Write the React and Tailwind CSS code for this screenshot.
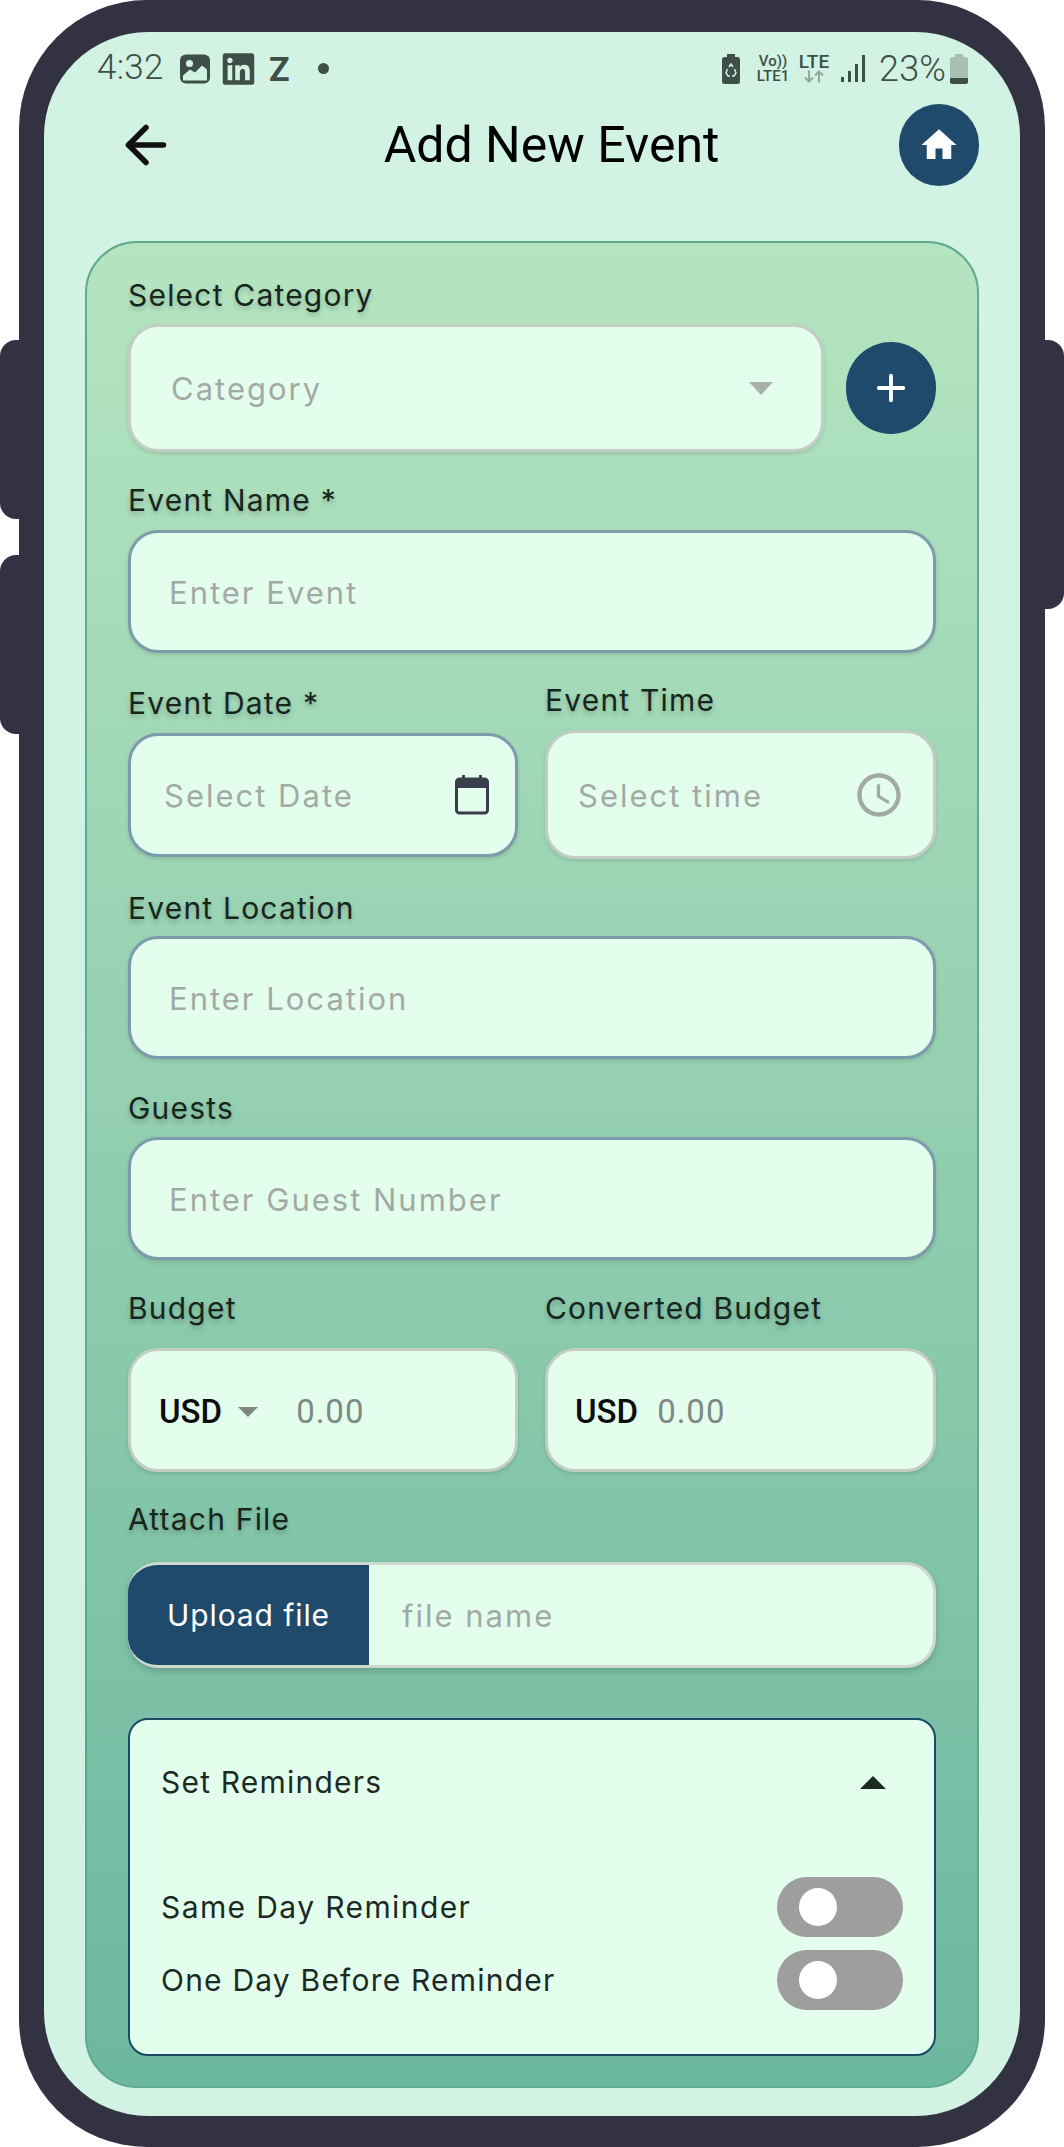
import React from 'react';
import { ArrowLeft, Plus } from 'lucide-react';
import { MdHome, MdAccessTime } from 'react-icons/md';
import { FaLinkedin } from 'react-icons/fa';

const Label = ({ children, className = '' }) => (
  <div className={`h-[40px] leading-[40px] text-[30px] tracking-[1.2px] text-[#16261e] [text-shadow:0_3px_5px_rgba(0,0,0,0.22)] whitespace-nowrap ${className}`}>
    {children}
  </div>
);

const Placeholder = ({ children, className = '' }) => (
  <span className={`text-[31px] leading-[40px] pt-[2px] tracking-[2px] text-[#a3aaa5] whitespace-nowrap ${className}`}>{children}</span>
);

// text input with the blue-grey outline
const Input = ({ placeholder }) => (
  <div className="h-[123px] rounded-[30px] bg-[#e3feed] border-[3px] border-[#7c9cab] shadow-[0_2px_4px_rgba(0,0,0,0.12)] flex items-center pl-[38px]">
    <Placeholder>{placeholder}</Placeholder>
  </div>
);

const Toggle = () => (
  <div className="w-[126px] h-[60px] rounded-full bg-[#9e9e9e] flex items-center pl-[22px]">
    <div className="w-[38px] h-[38px] rounded-full bg-white" />
  </div>
);

const StatusBar = () => (
  <div className="h-[72px] pt-[1px] pl-[53px] pr-[52px] flex items-center text-[#3d4f46]">
    <span className="text-[35px] font-['Roboto',sans-serif] font-light w-[68px] tracking-[0.3px]">4:32</span>
    <svg viewBox="0 0 30 29" className="ml-[15px] w-[30px] h-[30px]">
      <rect width="30" height="29" rx="6" fill="#3d4f46" />
      <circle cx="9.5" cy="9" r="3.5" fill="#d2f3e3" />
      <path d="M3 26 V21 L10 15 L15 18 L22 11 L27 15 V26Z" fill="#d2f3e3" />
    </svg>
    <FaLinkedin className="ml-[12px] w-[33px] h-[36px]" />
    <span className="ml-[14px] text-[34px] leading-none font-bold font-['Roboto',sans-serif]">Z</span>
    <div className="ml-[28px] w-[11px] h-[11px] rounded-full bg-[#3d4f46]" />
    <div className="flex-1" />
    <svg viewBox="0 0 18 30" className="w-[18px] h-[30px]">
      <rect x="5" y="0" width="8" height="4" fill="#3d4f46" />
      <rect y="3" width="18" height="27" rx="2.5" fill="#3d4f46" />
      <path d="M7 13 L9 10 L11 13 M12.5 15 L14 19 L12 22 H10 M8 22 H6 L4 19 L5.5 15" stroke="#d2f3e3" strokeWidth="1.5" fill="none" />
    </svg>
    <div className="ml-[15px] w-[36px] flex flex-col items-center font-['Roboto',sans-serif] text-[15px] leading-[15px] font-medium">
      <span>Vo))</span>
      <span>LTE1</span>
    </div>
    <div className="ml-[7px] w-[32px] flex flex-col items-center font-['Roboto',sans-serif]">
      <span className="text-[19px] leading-[16px] font-medium">LTE</span>
      <svg viewBox="0 0 24 12" className="w-[24px] h-[13px]">
        <path d="M7 0 V11 M3 7 L7 11 L11 7 M17 12 V1 M13 5 L17 1 L21 5" stroke="#93a89d" strokeWidth="2" fill="none" />
      </svg>
    </div>
    <svg viewBox="0 0 24 29" className="ml-[11px] w-[24px] h-[29px]">
      <rect x="0" y="23" width="3" height="5" fill="#3d4f46" />
      <rect x="7" y="17" width="3" height="11" fill="#3d4f46" />
      <rect x="14" y="10" width="3" height="18" fill="#3d4f46" />
      <rect x="21" y="1" width="3" height="27" fill="#3d4f46" />
    </svg>
    <span className="ml-[14px] text-[36px] font-['Roboto',sans-serif] font-light tracking-[0.2px] w-[66px]">23%</span>
    <svg viewBox="0 0 18 30" className="ml-[5px] w-[18px] h-[30px]">
      <rect x="5" y="0" width="8" height="4" fill="#a8c0b2" />
      <rect y="3" width="18" height="27" rx="2.5" fill="#a8c0b2" />
      <path d="M0 24 H18 V27.5 A2.5 2.5 0 0 1 15.5 30 H2.5 A2.5 2.5 0 0 1 0 27.5Z" fill="#3d4f46" />
    </svg>
  </div>
);

export default function App() {
  return (
    <div className="relative w-[1064px] h-[2147px] bg-white font-['Inter',sans-serif] overflow-hidden">
      {/* side buttons */}
      <div className="absolute left-0 top-[340px] w-[30px] h-[179px] rounded-l-[16px] bg-[#333242]" />
      <div className="absolute left-0 top-[555px] w-[30px] h-[179px] rounded-l-[16px] bg-[#333242]" />
      <div className="absolute right-0 top-[340px] w-[30px] h-[269px] rounded-r-[16px] bg-[#333242]" />

      <div className="relative mx-[19px] h-[2147px] pt-[32px] px-[25px] rounded-[128px] bg-[#333242]">
        <div className="h-[2084px] rounded-[104px] bg-[#d2f3e3] overflow-hidden">
          <StatusBar />

          <div className="h-[80px] mt-[1px] flex items-center">
            <ArrowLeft className="ml-[72px] w-[60px] h-[60px] text-[#111]" strokeWidth={2.2} />
            <div className="flex-1 pl-[28px] text-center font-['Roboto',sans-serif] text-[50px] text-black whitespace-nowrap">Add New Event</div>
            <div className="mr-[41px] w-[80px] h-[82px] rounded-full bg-[#1f4a6b] flex items-center justify-center">
              <MdHome className="w-[42px] h-[42px] text-white" />
            </div>
          </div>

          {/* form card */}
          <div className="mt-[56px] mx-[41px] h-[1847px] rounded-[52px] border-[2px] border-[#5fa98f] bg-gradient-to-b from-[#b5e5c0] to-[#6cb79f] px-[41px] pt-[32px]">
            <Label>Select Category</Label>
            <div className="mt-[9px] flex items-center">
              <div className="w-[696px] h-[128px] rounded-[30px] bg-[#e3feed] border-[3px] border-[#c2cdc4] shadow-[0_2px_4px_rgba(0,0,0,0.12)] flex items-center justify-between pl-[40px] pr-[48px]">
                <Placeholder className="tracking-[1.6px]">Category</Placeholder>
                <div className="w-0 h-0 border-x-[12px] border-x-transparent border-t-[13px] border-t-[#a9b1ac]" />
              </div>
              <div className="ml-[22px] w-[90px] h-[92px] rounded-full bg-[#1f4a6b] flex items-center justify-center">
                <Plus className="w-[42px] h-[42px] text-white" strokeWidth={2.2} />
              </div>
            </div>

            <Label className="mt-[28px]">Event Name *</Label>
            <div className="mt-[10px]"><Input placeholder="Enter Event" /></div>

            <div className="mt-[27px] grid grid-cols-[390px_391px] gap-x-[27px]">
              <div className="pt-[3px]">
                <Label>Event Date *</Label>
                <div className="mt-[10px] h-[124px] rounded-[30px] bg-[#e3feed] border-[3px] border-[#7c9cab] shadow-[0_2px_4px_rgba(0,0,0,0.12)] flex items-center justify-between pl-[33px] pr-[26px]">
                  <Placeholder className="tracking-[1.6px]">Select Date</Placeholder>
                  <svg viewBox="0 0 34 40" className="w-[34px] h-[40px]">
                    <rect x="7" y="0" width="3" height="6" fill="#3a3d4a" />
                    <rect x="24" y="0" width="3" height="6" fill="#3a3d4a" />
                    <rect x="1.5" y="4" width="31" height="34" rx="3" fill="none" stroke="#3a3d4a" strokeWidth="3" />
                    <rect x="1" y="4" width="32" height="9" fill="#3a3d4a" />
                  </svg>
                </div>
              </div>
              <div>
                <Label>Event Time</Label>
                <div className="mt-[10px] h-[129px] rounded-[30px] bg-[#e3feed] border-[3px] border-[#c2cdc4] shadow-[0_2px_4px_rgba(0,0,0,0.12)] flex items-center justify-between pl-[30px] pr-[28px]">
                  <Placeholder className="tracking-[1.2px]">Select time</Placeholder>
                  <MdAccessTime className="w-[52px] h-[52px] text-[#a3aaa5]" />
                </div>
              </div>
            </div>

            <Label className="mt-[29px]">Event Location</Label>
            <div className="mt-[8px]"><Input placeholder="Enter Location" /></div>

            <Label className="mt-[29px]">Guests</Label>
            <div className="mt-[9px]"><Input placeholder="Enter Guest Number" /></div>

            <div className="mt-[28px] grid grid-cols-[390px_391px] gap-x-[27px]">
              <div>
                <Label>Budget</Label>
                <div className="mt-[20px] h-[124px] rounded-[30px] bg-[#e3feed] border-[3px] border-[#c2cdc4] shadow-[0_2px_4px_rgba(0,0,0,0.12)] flex items-center pl-[28px] pt-[4px] font-['Roboto',sans-serif]">
                  <span className="text-[33px] font-medium text-[#0c0c0c]">USD</span>
                  <div className="ml-[16px] w-0 h-0 border-x-[10px] border-x-transparent border-t-[10px] border-t-[#7f8582]" />
                  <span className="ml-[38px] text-[33px] tracking-[1px] text-[#7e8884]">0.00</span>
                </div>
              </div>
              <div>
                <Label>Converted Budget</Label>
                <div className="mt-[20px] h-[124px] rounded-[30px] bg-[#e3feed] border-[3px] border-[#c2cdc4] shadow-[0_2px_4px_rgba(0,0,0,0.12)] flex items-center pl-[27px] pt-[4px] font-['Roboto',sans-serif]">
                  <span className="text-[33px] font-medium text-[#0c0c0c]">USD</span>
                  <span className="ml-[19px] text-[33px] tracking-[1px] text-[#7e8884]">0.00</span>
                </div>
              </div>
            </div>

            <Label className="mt-[27px]">Attach File</Label>
            <div className="mt-[23px] h-[106px] rounded-[30px] bg-[#e3feed] border-[3px] border-l-0 border-[#cdd8cf] shadow-[0_3px_6px_rgba(0,0,0,0.18)] flex items-center overflow-hidden">
              <div className="w-[241px] h-[106px] shrink-0 bg-[#1f4a6b] flex items-center justify-center text-[30px] tracking-[0.9px] text-white">Upload file</div>
              <Placeholder className="ml-[33px] tracking-[1.2px]">file name</Placeholder>
            </div>

            {/* reminders */}
            <div className="mt-[50px] h-[338px] rounded-[20px] bg-[#e3feed] border-[2px] border-[#1c4a66] pl-[31px] pr-[31px]">
              <div className="h-[124px] flex items-center justify-between text-[30px] tracking-[1.2px] text-[#1c2a24]">
                <span>Set Reminders</span>
                <div className="mr-[17px] w-0 h-0 border-x-[13px] border-x-transparent border-b-[13px] border-b-[#1c2a24]" />
              </div>
              <div className="mt-[33px] flex items-center justify-between text-[30px] tracking-[1.4px] text-[#1c2a24]">
                <span>Same Day Reminder</span>
                <Toggle />
              </div>
              <div className="mt-[13px] flex items-center justify-between text-[30px] tracking-[1.2px] text-[#1c2a24]">
                <span>One Day Before Reminder</span>
                <Toggle />
              </div>
            </div>
          </div>
        </div>
      </div>
    </div>
  );
}
